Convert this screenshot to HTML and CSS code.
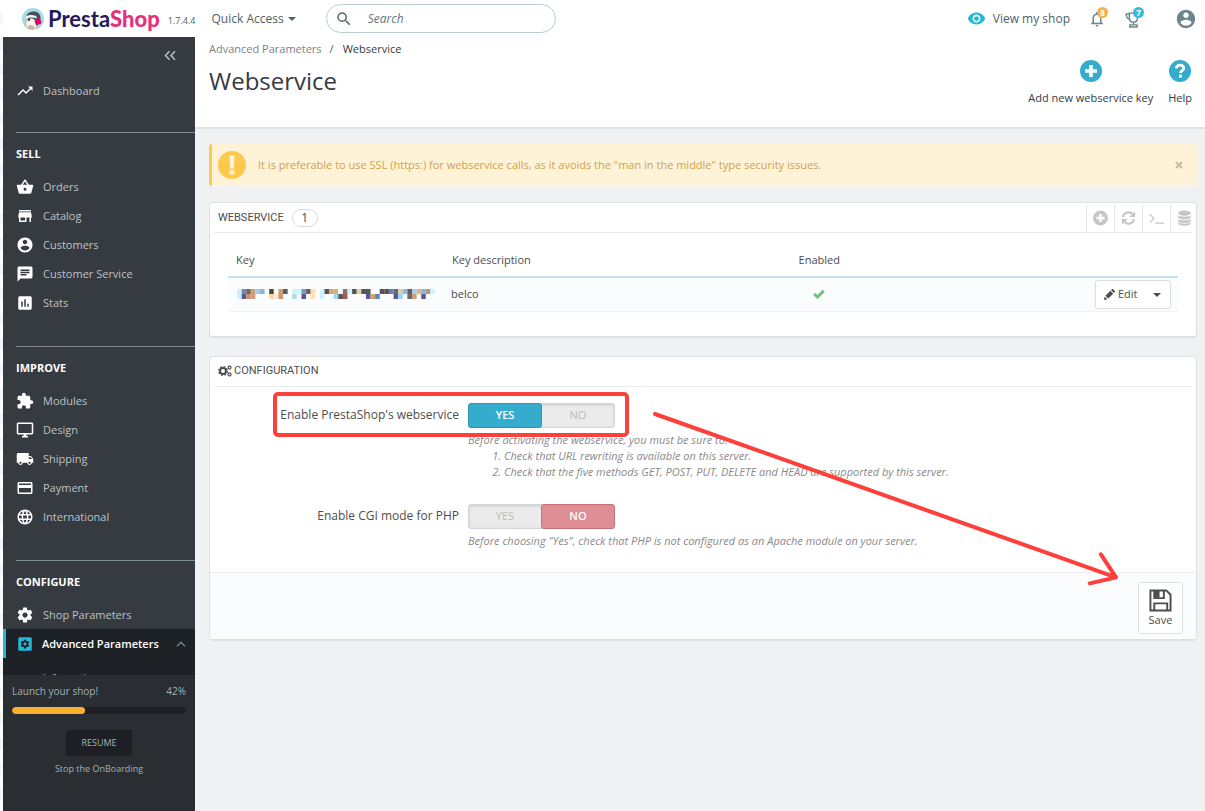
FILE: index.html
```html
<!DOCTYPE html>
<html lang="en">
  <head>
    <meta charset="UTF-8" />
    <meta name="viewport" content="width=device-width, initial-scale=1.0" />
    <title>Webservice • PrestaShop</title>
    <link rel="stylesheet" href="styles.css">
  </head>
  <body>
    <!-- icon set -->
    <svg class="sprite" aria-hidden="true">
      <symbol id="i-trend" viewBox="0 0 24 24"><path d="M16 6l2.29 2.29-4.88 4.88-4-4L2 16.59 3.41 18l6-6 4 4 6.3-6.29L22 12V6z"/></symbol>
      <symbol id="i-basket" viewBox="0 0 24 24"><path d="M17.21 9l-4.38-6.56c-.19-.28-.51-.42-.83-.42-.32 0-.64.14-.83.43L6.79 9H2c-.55 0-1 .45-1 1 0 .09.01.18.04.27l2.54 9.27c.23.84 1 1.46 1.92 1.46h13c.92 0 1.69-.62 1.93-1.46l2.54-9.27L23 10c0-.55-.45-1-1-1h-4.79zM9 9l3-4.4L15 9H9zm3 8c-1.1 0-2-.9-2-2s.9-2 2-2 2 .9 2 2-.9 2-2 2z"/></symbol>
      <symbol id="i-store" viewBox="0 0 24 24"><path d="M20 4H4v2h16V4zm1 10v-2l-1-5H4l-1 5v2h1v6h10v-6h4v6h2v-6h1zm-9 4H6v-4h6v4z"/></symbol>
      <symbol id="i-account" viewBox="0 0 24 24"><path d="M12 2C6.48 2 2 6.48 2 12s4.48 10 10 10 10-4.48 10-10S17.52 2 12 2zm0 3c1.66 0 3 1.34 3 3s-1.34 3-3 3-3-1.34-3-3 1.34-3 3-3zm0 14.2c-2.5 0-4.71-1.28-6-3.22.03-1.99 4-3.08 6-3.08 1.99 0 5.97 1.09 6 3.08-1.29 1.94-3.5 3.22-6 3.22z"/></symbol>
      <symbol id="i-chat" viewBox="0 0 24 24"><path d="M20 2H4c-1.1 0-1.99.9-1.99 2L2 22l4-4h14c1.1 0 2-.9 2-2V4c0-1.1-.9-2-2-2zM6 9h12v2H6V9zm8 5H6v-2h8v2zm4-6H6V6h12v2z"/></symbol>
      <symbol id="i-stats" viewBox="0 0 24 24"><path d="M19 3H5c-1.1 0-2 .9-2 2v14c0 1.1.9 2 2 2h14c1.1 0 2-.9 2-2V5c0-1.1-.9-2-2-2zM9 17H7v-7h2v7zm4 0h-2V7h2v10zm4 0h-2v-4h2v4z"/></symbol>
      <symbol id="i-module" viewBox="0 0 24 24"><path d="M20.5 11H19V7c0-1.1-.9-2-2-2h-4V3.5C13 2.12 11.88 1 10.5 1S8 2.12 8 3.5V5H4c-1.1 0-1.99.9-1.99 2v3.8H3.5c1.49 0 2.7 1.21 2.7 2.7s-1.21 2.7-2.7 2.7H2V20c0 1.1.9 2 2 2h3.8v-1.5c0-1.49 1.21-2.7 2.7-2.7 1.49 0 2.7 1.21 2.7 2.7V22H17c1.1 0 2-.9 2-2v-4h1.5c1.38 0 2.5-1.12 2.5-2.5S21.88 11 20.5 11z"/></symbol>
      <symbol id="i-desktop" viewBox="0 0 24 24"><path d="M21 2H3c-1.1 0-2 .9-2 2v12c0 1.1.9 2 2 2h7v2H8v2h8v-2h-2v-2h7c1.1 0 2-.9 2-2V4c0-1.1-.9-2-2-2zm0 14H3V4h18v12z"/></symbol>
      <symbol id="i-truck" viewBox="0 0 24 24"><path d="M20 8h-3V4H3c-1.1 0-2 .9-2 2v11h2c0 1.66 1.34 3 3 3s3-1.34 3-3h6c0 1.66 1.34 3 3 3s3-1.34 3-3h2v-5l-3-4zM6 18.5c-.83 0-1.5-.67-1.5-1.5s.67-1.5 1.5-1.5 1.5.67 1.5 1.5-.67 1.5-1.5 1.5zm13.5-9l1.96 2.5H17V9.5h2.5zm-1.5 9c-.83 0-1.5-.67-1.5-1.5s.67-1.5 1.5-1.5 1.5.67 1.5 1.5-.67 1.5-1.5 1.5z"/></symbol>
      <symbol id="i-card" viewBox="0 0 24 24"><path d="M20 4H4c-1.11 0-1.99.89-1.99 2L2 18c0 1.11.89 2 2 2h16c1.11 0 2-.89 2-2V6c0-1.11-.89-2-2-2zm0 14H4v-6h16v6zm0-10H4V6h16v2z"/></symbol>
      <symbol id="i-globe" viewBox="0 0 24 24"><path d="M11.99 2C6.47 2 2 6.48 2 12s4.47 10 9.99 10C17.52 22 22 17.52 22 12S17.52 2 11.99 2zm6.93 6h-2.95c-.32-1.25-.78-2.45-1.38-3.56 1.84.63 3.37 1.91 4.33 3.56zM12 4.04c.83 1.2 1.48 2.53 1.91 3.96h-3.82c.43-1.43 1.08-2.76 1.91-3.96zM4.26 14C4.1 13.36 4 12.69 4 12s.1-1.36.26-2h3.38c-.08.66-.14 1.32-.14 2 0 .68.06 1.34.14 2H4.26zm.82 2h2.95c.32 1.25.78 2.45 1.38 3.56-1.84-.63-3.37-1.9-4.33-3.56zm2.95-8H5.08c.96-1.66 2.49-2.93 4.33-3.56C8.81 5.55 8.35 6.75 8.03 8zM12 19.96c-.83-1.2-1.48-2.53-1.91-3.96h3.82c-.43 1.43-1.08 2.76-1.91 3.96zM14.34 14H9.66c-.09-.66-.16-1.32-.16-2 0-.68.07-1.35.16-2h4.68c.09.65.16 1.32.16 2 0 .68-.07 1.34-.16 2zm.25 5.56c.6-1.11 1.06-2.31 1.38-3.56h2.95c-.96 1.65-2.49 2.93-4.33 3.56zM16.36 14c.08-.66.14-1.32.14-2 0-.68-.06-1.34-.14-2h3.38c.16.64.26 1.31.26 2s-.1 1.36-.26 2h-3.38z"/></symbol>
      <symbol id="i-gear" viewBox="0 0 24 24"><path d="M19.43 12.98c.04-.32.07-.64.07-.98s-.03-.66-.07-.98l2.11-1.65c.19-.15.24-.42.12-.64l-2-3.46c-.12-.22-.39-.3-.61-.22l-2.49 1c-.52-.4-1.08-.73-1.69-.98l-.38-2.65C14.46 2.18 14.25 2 14 2h-4c-.25 0-.46.18-.49.42l-.38 2.65c-.61.25-1.17.59-1.69.98l-2.49-1c-.23-.09-.49 0-.61.22l-2 3.46c-.13.22-.07.49.12.64l2.11 1.65c-.04.32-.07.65-.07.98s.03.66.07.98l-2.11 1.65c-.19.15-.24.42-.12.64l2 3.46c.12.22.39.3.61.22l2.49-1c.52.4 1.08.73 1.69.98l.38 2.65c.03.24.24.42.49.42h4c.25 0 .46-.18.49-.42l.38-2.65c.61-.25 1.17-.59 1.69-.98l2.49 1c.23.09.49 0 .61-.22l2-3.46c.12-.22.07-.49-.12-.64l-2.11-1.65zM12 15.5c-1.93 0-3.5-1.57-3.5-3.5s1.57-3.5 3.5-3.5 3.5 1.57 3.5 3.5-1.57 3.5-3.5 3.5z"/></symbol>
      <symbol id="i-eye" viewBox="0 0 24 24"><path d="M12 4.5C7 4.5 2.73 7.61 1 12c1.73 4.39 6 7.5 11 7.5s9.27-3.11 11-7.5c-1.73-4.39-6-7.5-11-7.5zM12 17c-2.76 0-5-2.24-5-5s2.24-5 5-5 5 2.24 5 5-2.24 5-5 5zm0-8c-1.66 0-3 1.34-3 3s1.34 3 3 3 3-1.34 3-3-1.34-3-3-3z"/></symbol>
      <symbol id="i-bell" viewBox="0 0 24 24"><path d="M12 22c1.1 0 2-.9 2-2h-4c0 1.1.9 2 2 2zm6-6v-5c0-3.07-1.63-5.64-4.5-6.32V4c0-.83-.67-1.5-1.5-1.5s-1.5.67-1.5 1.5v.68C7.64 5.36 6 7.92 6 11v5l-2 2v1h16v-1l-2-2zm-2 1H8v-6c0-2.48 1.51-4.5 4-4.5s4 2.02 4 4.5v6z"/></symbol>
      <symbol id="i-search" viewBox="0 0 24 24"><path d="M15.5 14h-.79l-.28-.27A6.471 6.471 0 0 0 16 9.5 6.5 6.5 0 1 0 9.5 16c1.61 0 3.09-.59 4.23-1.57l.27.28v.79l5 4.99L20.49 19l-4.99-5zm-6 0C7.01 14 5 11.99 5 9.5S7.01 5 9.5 5 14 7.01 14 9.5 11.99 14 9.5 14z"/></symbol>
      <symbol id="i-plus" viewBox="0 0 24 24"><path fill-rule="evenodd" d="M12 0a12 12 0 1 0 0 24a12 12 0 1 0 0-24zM10 5.500h4v4.500h4.500v4H14v4.500h-4V14H5.500v-4H10z"/></symbol>
    </svg>

    <header class="header">
      <a class="logo" href="#" aria-label="PrestaShop">
        <svg class="logo-mark" viewBox="0 0 22 22">
          <circle cx="11" cy="11" r="11" fill="#a4dbe8"/>
          <path d="M3 18.500C2 15 3 12 5 11l7 2 4 8a11 11 0 0 1-13-2.500z" fill="#c9b79b"/>
          <path d="M4 9.500C4.500 5 9 3 13 3.500c4 .8 6 4 5.500 8L15 18l-4-5z" fill="#4a4f55"/>
          <path d="M5 20c-1.500-4-1-8 3-9.500 3-.5 5 1 5.500 3l1 8a11 11 0 0 1-9.500-1.500z" fill="#f4f4f2"/>
          <path d="M4 8.500c2-1.500 6-2 10-.5l1 2.500c-4-1.500-8-1.500-11.500.5z" fill="#f4f4f2"/>
          <circle cx="7" cy="11.800" r="1.200" fill="#33373c"/>
          <path d="M12.500 13.500c1.500-.5 2.500-2 3-4.500 2 1 4 4 4 6-1.500 1.500-3.500 2-5.500 1.500z" fill="#df0067"/>
          <path d="M7 17c2 0 4 .5 6 2l-1 2.800a11 11 0 0 1-7-1.800z" fill="#c9b79b"/>
        </svg>
        <span class="logo-text">Presta<b>Shop</b></span>
      </a>
      <span class="version">1.7.4.4</span>
      <button class="quick" type="button">Quick Access <i class="caret"></i></button>
      <form class="search" role="search">
        <svg class="search-icon"><use href="#i-search"/></svg>
        <input class="search-input" type="text" placeholder="Search" aria-label="Search" />
      </form>
      <a class="view-shop" href="#"><svg class="eye"><use href="#i-eye"/></svg>View my shop</a>
      <button class="notif" type="button" aria-label="Notifications">
        <svg class="notif-icon"><use href="#i-bell"/></svg>
        <span class="badge badge-orange">8</span>
      </button>
      <button class="notif" type="button" aria-label="Merchant expertise">
        <svg class="notif-icon" viewBox="0 0 20 20" fill="none" stroke="#6c868e" stroke-width="1.600">
          <path d="M6 3.500h9v5c0 3-2 5-4.500 5S6 11.500 6 8.500z"/>
          <path d="M6 4.500H2.500c0 3.500 1.500 5.500 4 5.500M10.500 13.500v3M6.500 18.800v-2.300h8v2.300z"/>
        </svg>
        <span class="badge badge-blue">7</span>
      </button>
      <button class="profile" type="button" aria-label="Profile"><svg class="profile-icon"><use href="#i-account"/></svg></button>
    </header>

    <div class="layout">
      <aside class="sidebar">
        <nav class="nav">
          <div class="nav-top">
            <button class="collapse" type="button" aria-label="Collapse menu">
              <svg viewBox="0 0 12 10" fill="none" stroke="#bec2c6" stroke-width="1.500"><path d="M5.500 .8L1.500 5l4 4.200M11 .8L7 5l4 4.200"/></svg>
            </button>
            <a class="nav-link" href="#"><svg class="nav-icon"><use href="#i-trend"/></svg>Dashboard</a>
          </div>
          <div class="nav-section">
            <h2 class="nav-title">Sell</h2>
            <a class="nav-link" href="#"><svg class="nav-icon"><use href="#i-basket"/></svg>Orders</a>
            <a class="nav-link" href="#"><svg class="nav-icon"><use href="#i-store"/></svg>Catalog</a>
            <a class="nav-link" href="#"><svg class="nav-icon"><use href="#i-account"/></svg>Customers</a>
            <a class="nav-link" href="#"><svg class="nav-icon"><use href="#i-chat"/></svg>Customer Service</a>
            <a class="nav-link" href="#"><svg class="nav-icon"><use href="#i-stats"/></svg>Stats</a>
          </div>
          <div class="nav-section">
            <h2 class="nav-title">Improve</h2>
            <a class="nav-link" href="#"><svg class="nav-icon"><use href="#i-module"/></svg>Modules</a>
            <a class="nav-link" href="#"><svg class="nav-icon"><use href="#i-desktop"/></svg>Design</a>
            <a class="nav-link" href="#"><svg class="nav-icon"><use href="#i-truck"/></svg>Shipping</a>
            <a class="nav-link" href="#"><svg class="nav-icon"><use href="#i-card"/></svg>Payment</a>
            <a class="nav-link" href="#"><svg class="nav-icon"><use href="#i-globe"/></svg>International</a>
          </div>
          <div class="nav-section nav-section-last">
            <h2 class="nav-title">Configure</h2>
            <a class="nav-link" href="#"><svg class="nav-icon"><use href="#i-gear"/></svg>Shop Parameters</a>
            <a class="nav-link active" href="#">
              <svg class="nav-icon" viewBox="0 0 24 24"><rect x="3" y="3" width="18" height="18" rx="2" fill="#25b9d7"/><use href="#i-gear" x="5" y="5" width="14" height="14" fill="#1e2125"/></svg>Advanced Parameters
              <svg class="chevron" viewBox="0 0 10 6" fill="none" stroke="#6c868e" stroke-width="1.500"><path d="M1 5.200L5 1.200l4 4"/></svg>
            </a>
            <div class="submenu"><a class="submenu-link" href="#">Information</a></div>
          </div>
        </nav>
        <div class="onboarding">
          <div class="onboarding-head"><span>Launch your shop!</span><span>42%</span></div>
          <div class="progress"><div class="progress-bar" style="width: 42%"></div></div>
          <button class="resume" type="button">Resume</button>
          <a class="stop" href="#">Stop the OnBoarding</a>
        </div>
      </aside>

      <main class="main">
        <div class="page-head">
          <div>
            <div class="breadcrumb"><a href="#">Advanced Parameters</a><span class="slash">/</span><span class="current">Webservice</span></div>
            <h1 class="page-title">Webservice</h1>
          </div>
          <div class="toolbar">
            <a class="tool" href="#"><svg class="tool-icon"><use href="#i-plus"/></svg>Add new webservice key</a>
            <a class="tool" href="#">
              <svg class="tool-icon" viewBox="0 0 24 24"><circle cx="12" cy="12" r="12"/><path d="M8 9.200c.2-2.500 1.800-3.700 4-3.700s4.200 1.300 4.200 3.400c0 2.600-3.700 2.600-3.700 5.300" fill="none" stroke="#fff" stroke-width="3"/><path d="M10.900 16h3.200v3.200h-3.200z" fill="#fff"/></svg>Help
            </a>
          </div>
        </div>

        <div class="content">
          <div class="alert">
            <svg class="alert-icon" viewBox="0 0 28 28"><circle cx="14" cy="14" r="14" fill="#fcc94f"/><path d="M11.500 4.500h5l-.5 13h-4zM11.500 19.500h5v4h-5z" fill="#fff3d8"/></svg>
            <span>It is preferable to use SSL (https:) for webservice calls, as it avoids the "man in the middle" type security issues.</span>
            <button class="close" type="button" aria-label="Close"><svg viewBox="0 0 8 8" stroke="#c8bda4" stroke-width="2.200"><path d="M1 1l6 6M7 1L1 7"/></svg></button>
          </div>

          <section class="panel">
            <div class="panel-head">
              <h2 class="panel-title">Webservice</h2>
              <span class="count">1</span>
              <div class="panel-tools">
                <button type="button" aria-label="Add new"><svg class="pt-icon"><use href="#i-plus"/></svg></button>
                <button type="button" aria-label="Refresh list"><svg class="pt-icon" viewBox="0 0 16 16"><path d="M2 7a6 6 0 0 1 10.500-3M14 9a6 6 0 0 1-10.500 3" fill="none" stroke="#c6c6c6" stroke-width="2.200"/><path d="M15 1v6H9zM1 15V9h6z"/></svg></button>
                <button type="button" aria-label="Show SQL query"><svg class="pt-icon" viewBox="0 0 16 16" fill="none" stroke="#c6c6c6" stroke-width="1.300"><path d="M.8 4l4.500 4.500L.8 13M7 13.500h9"/></svg></button>
                <button type="button" aria-label="Export to SQL Manager"><svg class="pt-icon" viewBox="0 0 16 18"><path d="M1 3.500c0-4 14-4 14 0s-14 4-14 0zM1 6c2 2.200 12 2.200 14 0v2.500c-1 3-13 3-14 0zM1 10c2 2.200 12 2.200 14 0v2.300c-1 3-13 3-14 0zM1 13.900c2 2.200 12 2.200 14 0v1.500c-1 3-13 3-14 0z"/></svg></button>
              </div>
            </div>
            <div class="table-wrap">
              <table class="table">
                <thead>
                  <tr>
                    <th class="col-key">Key</th>
                    <th class="col-desc">Key description</th>
                    <th class="col-enabled">Enabled</th>
                    <th></th>
                  </tr>
                </thead>
                <tbody>
                  <tr>
                    <td><svg class="mosaic" id="mosaic" viewBox="0 0 43 2" preserveAspectRatio="none"></svg></td>
                    <td>belco</td>
                    <td class="col-enabled"><svg class="check" viewBox="0 0 12 10" fill="none" stroke="#72c279" stroke-width="3"><path d="M1.200 4.800l3.300 3.200 6.300-6.300"/></svg></td>
                    <td>
                      <div class="btn-group">
                        <button class="edit" type="button"><svg class="pencil" viewBox="0 0 12 12"><path d="M0 12l.8-3.700L3.700 11.200zM1.600 7.300l5.300-5.300 3.100 3.100-5.300 5.300zM7.700 1.200L8.600.3c.4-.4 1-.4 1.400 0L11.700 2c.4.4.4 1 0 1.400l-.9.9z"/></svg>Edit</button>
                        <button class="more" type="button" aria-label="More actions"><i class="caret"></i></button>
                      </div>
                    </td>
                  </tr>
                </tbody>
              </table>
            </div>
          </section>

          <form class="panel config">
            <div class="panel-head">
              <h2 class="panel-title">
                <svg class="cogs" viewBox="0 0 14 12"><circle cx="5" cy="6" r="3" fill="none" stroke="#4d4d4d" stroke-width="2"/><circle cx="5" cy="6" r="4.300" fill="none" stroke="#4d4d4d" stroke-width="1.300" stroke-dasharray="1.700 1.680"/><circle cx="11.500" cy="2.600" r="1.500" fill="none" stroke="#4d4d4d" stroke-width="1.200"/><circle cx="11.500" cy="9.400" r="1.500" fill="none" stroke="#4d4d4d" stroke-width="1.200"/></svg>
                Configuration
              </h2>
            </div>
            <div class="form-body">
              <div class="form-row">
                <div class="form-label" id="ws-label">Enable PrestaShop's webservice</div>
                <div>
                  <div class="switch" role="radiogroup" aria-labelledby="ws-label">
                    <input type="radio" name="ws" id="ws-on" checked /><label class="yes" for="ws-on">YES</label>
                    <input type="radio" name="ws" id="ws-off" /><label class="no" for="ws-off">NO</label>
                  </div>
                  <div class="help">
                    Before activating the webservice, you must be sure to:
                    <ol>
                      <li>Check that URL rewriting is available on this server.</li>
                      <li>Check that the five methods GET, POST, PUT, DELETE and HEAD are supported by this server.</li>
                    </ol>
                  </div>
                </div>
                <div class="highlight"></div>
              </div>
              <div class="form-row">
                <div class="form-label" id="cgi-label">Enable CGI mode for PHP</div>
                <div>
                  <div class="switch" role="radiogroup" aria-labelledby="cgi-label">
                    <input type="radio" name="cgi" id="cgi-on" /><label class="yes" for="cgi-on">YES</label>
                    <input type="radio" name="cgi" id="cgi-off" checked /><label class="no" for="cgi-off">NO</label>
                  </div>
                  <div class="help">Before choosing "Yes", check that PHP is not configured as an Apache module on your server.</div>
                </div>
              </div>
            </div>
            <div class="panel-footer">
              <button class="save" type="submit">
                <svg class="save-icon" viewBox="0 0 24 24" fill="none" stroke="#4d4d4d" stroke-width="2"><path d="M1.500 1.500h16.500l4.500 4.500v16.500h-21z"/><path d="M5.500 22.500v-7.500h13.500v7.500M5.500 1.500v8h10v-8"/><path d="M6 2h5v7H6z" fill="#4d4d4d" stroke="none"/></svg>
                Save
              </button>
            </div>
            <!-- arrow from the switch to the save button -->
            <svg class="arrow" viewBox="0 0 466 174" fill="none" stroke="#fd403b" stroke-width="4" stroke-linecap="round" stroke-linejoin="round"><path d="M2 3l460 163M447 143l15 23-26 6"/></svg>
          </form>
        </div>
      </main>
    </div>

    <script>
      // masked key, two rows of blocks ("-" = empty)
      const rows = [
        "cff1fb 7b86b8 6b6868 cfa070 9fd0ea 8fb0d8 - 4a4646 fffbe6 cf9f72 605a5a - cdf3fd cdf3fd 6f9fcf 7a5a5c ffe2b0 - cdf3fd 555555 d6a678 d6b080 eefaff 9a6a66 cdf3fd 555555 e6cfa6 555555 555555 - - 5a5050 5a5050 6a80b0 6a6a6a e0cba8 8fb8e0 6a5a60 9fd0f5 d8b890 8fb0d8 b09a80 cdf3fd",
        "cdf3fd 5a5a90 c8956c d0a080 - - - ffd49a f0eaf0 d09868 - - b0dce8 - 5a5a90 - ffe2b0 - cdf3fd - - a0d4f8 555555 9a6058 - - - - 5a5a90 d0a070 5a88b8 - - - 5a5a90 9fd4f8 - 6a6a6a cf9f72 - 5a5a90 - -",
      ];
      const mosaic = document.getElementById("mosaic");
      rows.forEach((row, y) => {
        row.split(" ").forEach((color, x) => {
          if (color === "-") return;
          mosaic.innerHTML += `<rect x="${x}" y="${y}" width="1" height="1" fill="#${color}"/>`;
        });
      });
    </script>
  </body>
</html>
```
FILE: styles.css
```css
* {
  box-sizing: border-box;
}
body {
  margin: 0;
  padding-left: 3px;
  height: 100vh;
  display: flex;
  flex-direction: column;
  font: 12px/16px "Open Sans", sans-serif;
  color: #4d4d4d;
  background: repeating-linear-gradient(#fff 0, #fff 13px, #f5f5f5 13px, #f5f5f5 25px);
}
a {
  color: inherit;
  text-decoration: none;
}
button {
  font: inherit;
  color: inherit;
  background: none;
  border: 0;
  padding: 0;
  cursor: pointer;
}
svg {
  flex: none;
}
svg:not([fill]) {
  fill: currentColor;
}
h1,
h2 {
  margin: 0;
}
.sprite {
  display: none;
}
.caret {
  display: inline-block;
  border: 4px solid transparent;
  border-top-color: currentColor;
  border-bottom: 0;
  vertical-align: middle;
}

/* header */
.header {
  height: 37px;
  flex: none;
  display: flex;
  align-items: center;
  padding: 0 8px 0 19px;
  background: #fff;
  color: #4e6167;
}
.logo {
  display: flex;
  align-items: center;
  gap: 4px;
}
.logo-mark {
  width: 22px;
  height: 22px;
}
.logo-text {
  font: 700 22px/24px Lato, sans-serif;
  color: #251b5b;
}
.logo-text b {
  color: #e5317a;
}
.version {
  margin: 4px 16px 0 8px;
  font-size: 9px;
}
.quick .caret {
  margin-left: 1px;
}
.search {
  display: flex;
  align-items: center;
  width: 230px;
  height: 29px;
  margin-left: 30px;
  padding: 0 12px 0 8px;
  border: 1px solid #bbcdd2;
  border-radius: 15px;
}
.search-icon {
  width: 18px;
  height: 18px;
  color: #5e6569;
}
.search-input {
  flex: 1;
  min-width: 0;
  margin-left: 15px;
  padding: 0;
  border: 0;
  outline: 0;
  background: none;
  font: inherit;
}
.search-input::placeholder {
  color: #5f7880;
  font-style: italic;
  opacity: 1;
}
.view-shop {
  display: flex;
  align-items: center;
  gap: 7px;
  margin-left: auto;
}
.eye {
  width: 19px;
  height: 19px;
  color: #25b9d7;
}
.notif {
  position: relative;
  width: 18px;
  height: 18px;
  margin-left: 18px;
  color: #6c868e;
}
.notif-icon {
  display: block;
  width: 18px;
  height: 18px;
}
.badge {
  position: absolute;
  top: -3px;
  right: -2px;
  width: 11px;
  height: 11px;
  border-radius: 50%;
  color: #fff;
  font: 700 8px/11px "Open Sans", sans-serif;
  text-align: center;
}
.badge-orange {
  background: #f5b04e;
}
.badge-blue {
  background: #33bcd8;
}
.profile {
  margin-left: 33px;
}
.profile-icon {
  display: block;
  width: 22px;
  height: 22px;
  color: #6c868e;
}

/* sidebar */
.layout {
  flex: 1;
  min-height: 0;
  display: flex;
}
.sidebar {
  width: 192px;
  flex: none;
  display: flex;
  flex-direction: column;
  background: #363a41;
  color: #bec2c6;
  font-size: 11px;
}
.nav {
  flex: 1;
  min-height: 0;
  overflow: hidden;
  display: flex;
  flex-direction: column;
}
.nav-top {
  flex: none;
  height: 95px;
}
.collapse {
  display: block;
  margin: 13px 19px 15px auto;
}
.collapse svg {
  display: block;
  width: 12px;
  height: 11px;
}
.nav-link {
  display: flex;
  align-items: center;
  height: 29px;
  padding-left: 13px;
}
.nav-icon {
  width: 18px;
  height: 18px;
  margin-right: 9px;
  color: #fff;
}
.nav-section {
  flex: none;
  padding-bottom: 29px;
}
.nav-title {
  margin-left: 13px;
  height: 40px;
  border-top: 1px solid #7b8a91;
  color: #fff;
  font: 700 11px/42px "Open Sans", sans-serif;
  text-transform: uppercase;
}
.nav-section-last {
  flex: 1;
  padding: 0;
  display: flex;
  flex-direction: column;
}
.nav-link.active {
  padding: 0 9px 0 10px;
  border-left: 3px solid #25b9d7;
  background: #1e2125;
  color: #fff;
  font-weight: 600;
}
.nav-link.active .nav-icon {
  margin-right: 8px;
}
.chevron {
  width: 10px;
  height: 6px;
  margin-left: auto;
}
.submenu {
  flex: 1;
  background: #1e2125;
}
.submenu-link {
  display: block;
  padding: 12px 0 0 40px;
  font-size: 10px;
}
.onboarding {
  height: 136px;
  flex: none;
  display: flex;
  flex-direction: column;
  align-items: center;
  padding: 8px 9px;
  background: #2a2d32;
  color: #9db3ba;
  font-size: 10px;
}
.onboarding-head {
  align-self: stretch;
  display: flex;
  justify-content: space-between;
}
.progress {
  align-self: stretch;
  height: 7px;
  margin: 8px 0 16px;
  border-radius: 4px;
  background: #1d1f23;
  overflow: hidden;
}
.progress-bar {
  height: 100%;
  border-radius: 4px;
  background: #fbb02d;
}
.resume {
  width: 66px;
  height: 26px;
  border-radius: 2px;
  background: #1e1f24;
  font-size: 9px;
  text-transform: uppercase;
}
.stop {
  margin-top: 5px;
  font-size: 9px;
}

/* page */
.main {
  flex: 1;
  min-width: 0;
  background: #eff1f2;
}
.page-head {
  display: flex;
  justify-content: space-between;
  height: 92px;
  padding: 4px 13px 0 14px;
  border-bottom: 2px solid #dfe1e3;
  background: #fff;
}
.breadcrumb {
  color: #7d7f82;
  font-size: 11px;
}
.slash {
  margin: 0 9px 0 8px;
  color: #4e6a5a;
}
.current {
  color: #363a41;
}
.page-title {
  margin-top: 8px;
  font: 400 24px/32px "Open Sans", sans-serif;
  color: #363a41;
}
.toolbar {
  display: flex;
  gap: 15px;
  padding-top: 19px;
}
.tool {
  display: flex;
  flex-direction: column;
  align-items: center;
  gap: 8px;
  color: #363a41;
  font-size: 11px;
}
.tool-icon {
  width: 22px;
  height: 22px;
  color: #35abce;
}
.content {
  padding: 15px 8px 0 14px;
}
.alert {
  display: flex;
  align-items: center;
  height: 42px;
  margin-bottom: 16px;
  padding: 0 14px 0 6px;
  border-left: 3px solid #fcc94f;
  border-radius: 3px;
  background: #fff3d7;
  color: #d2a04f;
  font-size: 11px;
}
.alert-icon {
  width: 28px;
  height: 28px;
  margin-right: 12px;
}
.close {
  margin-left: auto;
}
.close svg {
  display: block;
  width: 8px;
  height: 8px;
}
.panel {
  position: relative;
  margin-bottom: 18px;
  border: 1px solid #dde1e5;
  border-bottom-width: 2px;
  border-radius: 4px;
  background: #fff;
}
.panel-head {
  display: flex;
  align-items: center;
  height: 30px;
  margin: 0 4px;
  padding-left: 4px;
  border-bottom: 1px solid #ebebeb;
}
.panel-title {
  display: flex;
  align-items: center;
  gap: 2px;
  font: 400 11px/16px Roboto, sans-serif;
  text-transform: uppercase;
}
.count {
  width: 26px;
  height: 18px;
  margin-left: 8px;
  border: 1px solid #d8dadc;
  border-radius: 9px;
  font-size: 12px;
  line-height: 16px;
  text-align: center;
}
.panel-tools {
  display: flex;
  margin-left: auto;
  height: 28px;
}
.panel-tools button {
  width: 28px;
  padding-left: 6px;
  border-left: 1px solid #e6e6e6;
  color: #c6c6c6;
}
.panel-tools button:last-child {
  width: 22px;
}
.pt-icon {
  display: block;
  width: 15px;
  height: 16px;
}
.table-wrap {
  padding: 0 18px 24px;
}
.table {
  width: 100%;
  border-collapse: collapse;
  table-layout: fixed;
  font-size: 11px;
}
.table th {
  height: 44px;
  padding: 11px 8px 0;
  border-bottom: 2px solid #c4dfee;
  font-weight: 400;
  text-align: left;
}
.table td {
  height: 34px;
  padding: 0 7px;
  border-bottom: 1px solid #eff1f2;
  background: #fbfcfe;
}
.table .col-key {
  width: 216px;
}
.table .col-desc {
  width: 27%;
}
.table .col-enabled {
  width: 25%;
  text-align: center;
}
.mosaic {
  display: block;
  width: 198px;
  height: 10px;
  margin-left: 2px;
}
.check {
  display: block;
  width: 12px;
  height: 10px;
  margin: 0 auto;
}
.btn-group {
  display: flex;
  width: 76px;
  height: 29px;
  margin-left: auto;
  border: 1px solid #dadcde;
  border-radius: 3px;
  background: #fff;
}
.edit {
  display: flex;
  align-items: center;
  gap: 3px;
  padding-left: 8px;
}
.pencil {
  width: 11px;
  height: 11px;
}
.more {
  flex: 1;
  padding-left: 6px;
}

/* configuration */
.cogs {
  width: 14px;
  height: 12px;
}
.form-body {
  padding: 16px 18px 0;
}
.form-row {
  position: relative;
  display: flex;
  gap: 9px;
  min-height: 101px;
}
.form-label {
  width: 231px;
  flex: none;
  line-height: 24px;
  text-align: right;
}
.form-row:last-child {
  min-height: 68px;
}
.switch {
  position: relative;
  display: flex;
  width: 147px;
  height: 25px;
  border: 1px solid #d3d6d8;
  border-radius: 3px;
  background: #ebebeb;
  box-shadow: inset 0 1px 3px rgba(0, 0, 0, 0.15);
}
.switch input {
  position: absolute;
  opacity: 0;
}
.switch label {
  flex: 1;
  margin: -1px;
  border: 1px solid transparent;
  border-radius: 3px;
  color: #bbb;
  font-size: 11px;
  line-height: 22px;
  text-align: center;
}
.switch .yes {
  margin-right: 0;
}
.switch input:checked + label {
  color: #fff;
  font-weight: 600;
}
.switch input:checked + .yes {
  background: #35abce;
  border-color: #2b97b7;
}
.switch input:checked + .no {
  background: #de8e94;
  border-color: #ca7178;
}
.help {
  margin-top: 4px;
  color: #8a8a8a;
  font-size: 11px;
  font-style: italic;
}
.help ol {
  margin: 0;
  padding-left: 36px;
}
.highlight {
  position: absolute;
  left: 45px;
  top: -11px;
  width: 356px;
  height: 45px;
  border: 4px solid #fd403b;
  border-radius: 5px;
}
.arrow {
  position: absolute;
  left: 443px;
  right: 76px;
  top: 54px;
  overflow: visible;
}
.panel-footer {
  display: flex;
  justify-content: flex-end;
  height: 67px;
  padding: 9px 13px 0 0;
  border-top: 1px solid #ebedef;
  background: #fbfcfe;
}
.save {
  display: flex;
  flex-direction: column;
  align-items: center;
  width: 45px;
  height: 52px;
  padding-top: 6px;
  border: 1px solid #dfe1e3;
  border-radius: 3px;
  background: #fff;
  font-size: 11px;
}
.save-icon {
  width: 23px;
  height: 23px;
}
```
